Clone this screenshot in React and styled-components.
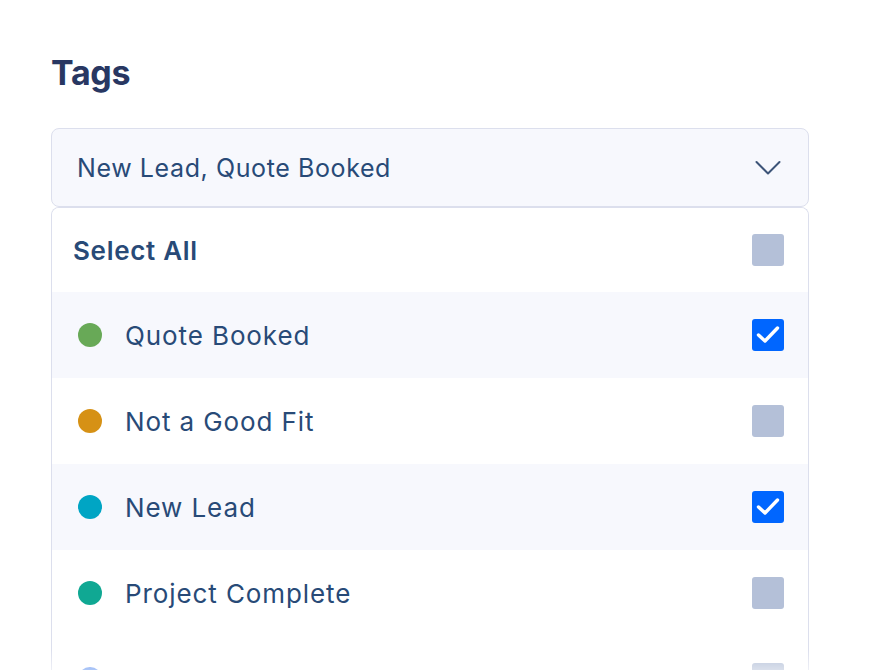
import React, { useState } from 'react';
import styled, { createGlobalStyle } from 'styled-components';

const GlobalStyle = createGlobalStyle`
  html, body {
    margin: 0;
    padding: 0;
    background: #ffffff;
    font-family: Inter, "Noto Sans", sans-serif;
    overflow: hidden;
  }
`;

const Page = styled.div`
  padding: 52px 61px 0 51px;
  width: 870px;
  height: 670px;
  box-sizing: border-box;
  overflow: hidden;
  position: relative;
`;

const Title = styled.h2`
  margin: 0 0 34px;
  font-size: 34px;
  line-height: 42px;
  font-weight: 700;
  letter-spacing: -0.3px;
  color: #283762;
`;

const Field = styled.div`
  display: flex;
  flex-direction: column;
`;

const Trigger = styled.button`
  display: flex;
  align-items: center;
  justify-content: space-between;
  box-sizing: border-box;
  height: 79px;
  padding: 0 27px 0 25px;
  background: #f7f8fd;
  border: 1.5px solid #dcdfed;
  border-radius: 8px;
  font-family: inherit;
  font-size: 25px;
  letter-spacing: 0.6px;
  color: #284a77;
  cursor: pointer;
  text-align: left;
`;

const Panel = styled.ul`
  list-style: none;
  margin: 0;
  padding: 0;
  border: 1.5px solid #dcdfed;
  border-bottom: none;
  border-radius: 8px 8px 0 0;
  background: #ffffff;
  overflow: hidden;
`;

const Row = styled.li`
  display: flex;
  align-items: center;
  height: ${p => (p.$header ? '84px' : '86px')};
  padding: 0 24px 0 ${p => (p.$header ? '21px' : '26px')};
  background: ${p => (p.$shaded ? '#f7f8fd' : '#ffffff')};
  cursor: pointer;
`;

const Dot = styled.span`
  width: 24px;
  height: 24px;
  border-radius: 50%;
  background: ${p => p.$color};
  flex-shrink: 0;
  margin-right: 23px;
`;

const Label = styled.span`
  flex: 1;
  font-size: 26px;
  font-weight: ${p => (p.$bold ? 600 : 400)};
  letter-spacing: ${p => (p.$bold ? '0.7px' : '0.9px')};
  color: #284a77;
`;

const Box = styled.span`
  width: 32px;
  height: 32px;
  border-radius: 3px;
  background: ${p => (p.$checked ? '#0066ff' : '#b4c0d8')};
  display: flex;
  align-items: center;
  justify-content: center;
  flex-shrink: 0;
`;

const Fade = styled.div`
  position: absolute;
  left: 0;
  right: 0;
  bottom: 0;
  height: 20px;
  background: linear-gradient(rgba(255,255,255,0), rgba(255,255,255,0.5));
  pointer-events: none;
`;

const Chevron = () => (
  <svg width="26" height="16" viewBox="0 0 26 16" fill="none">
    <path d="M1.5 2 L13 13.5 L24.5 2" stroke="#3d5478" strokeWidth="2" strokeLinecap="round" strokeLinejoin="round" />
  </svg>
);

const Check = () => (
  <svg width="24" height="20" viewBox="0 0 24 20" fill="none">
    <path d="M2.5 10 L9 16 L21.5 3" stroke="#ffffff" strokeWidth="3.4" strokeLinecap="round" strokeLinejoin="round" />
  </svg>
);

const tags = [
  { name: 'Quote Booked', color: '#68a957', checked: true },
  { name: 'Not a Good Fit', color: '#d69115', checked: false },
  { name: 'New Lead', color: '#00a5c4', checked: true },
  { name: 'Project Complete', color: '#10a893', checked: false },
  { name: 'Repeat Customer', color: '#5d8ff0', checked: false },
];

export default function App() {
  const [items, setItems] = useState(tags);

  const toggle = i =>
    setItems(items.map((t, j) => (j === i ? { ...t, checked: !t.checked } : t)));

  const allChecked = items.every(t => t.checked);
  const selected = items.filter(t => t.checked).map(t => t.name).reverse().join(', ');

  return (
    <>
      <GlobalStyle />
      <Page>
        <Title>Tags</Title>
        <Field>
          <Trigger type="button">
            <span>{selected}</span>
            <Chevron />
          </Trigger>
          <Panel>
            <Row $header onClick={() => setItems(items.map(t => ({ ...t, checked: !allChecked })))}>
              <Label $bold>Select All</Label>
              <Box $checked={allChecked}>{allChecked && <Check />}</Box>
            </Row>
            {items.map((t, i) => (
              <Row key={t.name} $shaded={t.checked} onClick={() => toggle(i)}>
                <Dot $color={t.color} />
                <Label>{t.name}</Label>
                <Box $checked={t.checked}>{t.checked && <Check />}</Box>
              </Row>
            ))}
          </Panel>
        </Field>
        <Fade />
      </Page>
    </>
  );
}
